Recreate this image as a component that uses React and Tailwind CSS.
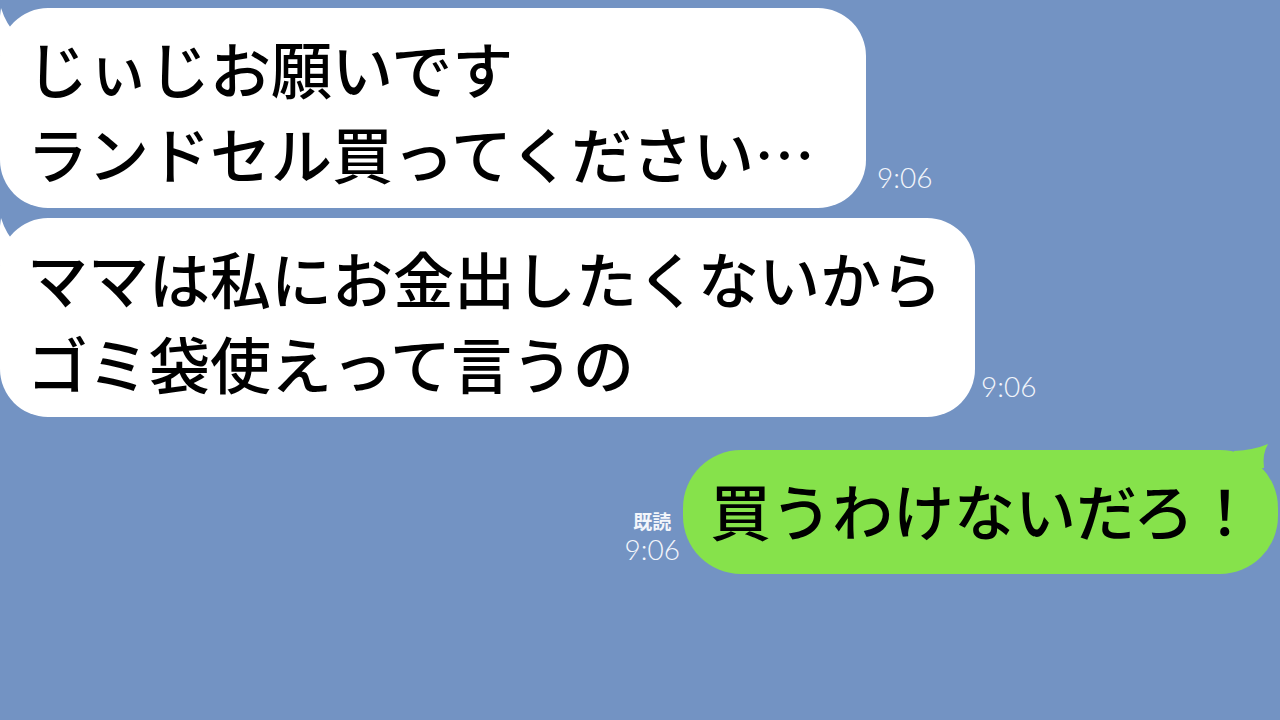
import React from "react";

// ─── Bubble horn ───────────────────────────────────────────────────
function HornLeft({ fill }) {
  return (
    <svg className="absolute left-0 top-0 overflow-visible" width="40" height="50" viewBox="0 0 40 50">
      <path d="M1 0 Q6 16 16 26 L0 48 L0 8 Z" fill={fill} />
    </svg>
  );
}

function HornRight({ fill }) {
  return (
    <svg className="absolute right-0 top-0 overflow-visible" width="50" height="40" viewBox="0 0 50 40">
      <path d="M6 1 Q26 0 40 -6 Q34 4 36 18 L6 18 Z" fill={fill} />
    </svg>
  );
}

function Time({ children, className = "" }) {
  return (
    <span className={`font-['Lato','Open_Sans',sans-serif] font-light text-[28px] leading-none text-[#f3f6fb] ${className}`}>
      {children}
    </span>
  );
}

function LeftBubble({ lines, className }) {
  return (
    <div className={`relative bg-white rounded-[48px] pl-[27px] pt-[17px] text-[61px] font-medium leading-[85px] text-black whitespace-nowrap ${className}`}>
      <HornLeft fill="#ffffff" />
      {lines.map((l) => (
        <div key={l} className="relative">{l}</div>
      ))}
    </div>
  );
}

export default function App() {
  return (
    <div className="w-[1280px] h-[720px] overflow-hidden bg-[#7393c3] flex flex-col font-['Noto_Sans_CJK_JP','Noto_Sans',sans-serif]">
      <div className="flex items-end mt-[8px]">
        <LeftBubble className="w-[866px] h-[200px]" lines={["じぃじお願いです", "ランドセル買ってください…"]} />
        <Time className="ml-[11px] mb-[17px]">9:06</Time>
      </div>

      <div className="flex items-end mt-[10px]">
        <LeftBubble className="w-[975px] h-[199px]" lines={["ママは私にお金出したくないから", "ゴミ袋使えって言うの"]} />
        <Time className="ml-[6px] mb-[17px]">9:06</Time>
      </div>

      <div className="flex items-end justify-end mt-[33px] pr-[2px]">
        <div className="flex flex-col items-center mr-[3px] mb-[11px]">
          <span className="text-[19px] leading-none font-bold text-[#f3f6fb] mb-[5px]">既読</span>
          <Time>9:06</Time>
        </div>
        <div className="relative bg-[#86e24b] rounded-[58px] w-[595px] h-[124px] pl-[27px] pt-[17px] text-[61px] font-medium leading-[85px] text-black whitespace-nowrap">
          <HornRight fill="#86e24b" />
          <div className="relative">買うわけないだろ！</div>
        </div>
      </div>
    </div>
  );
}
